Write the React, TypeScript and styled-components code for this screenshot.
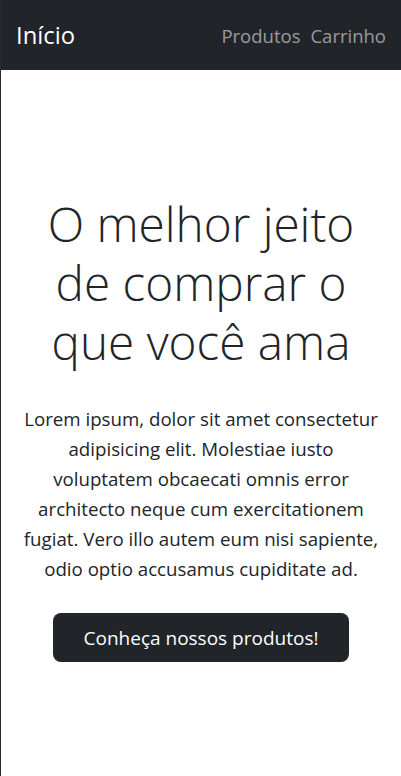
import React from "react";
import styled, { createGlobalStyle } from "styled-components";

const Global = createGlobalStyle`
  * { box-sizing: border-box; }
  html, body { margin: 0; padding: 0; background: #fff; }
  body {
    font-family: "Open Sans", "Noto Sans", "Liberation Sans", sans-serif;
    color: #212529;
    border-left: 1px solid #2b2b2b;
    min-height: 776px;
  }
`;

const Nav = styled.nav`
  height: 70px;
  background: #212529;
  display: flex;
  align-items: center;
  justify-content: space-between;
  padding: 0 15px 0 16px;
  margin-left: -1px;
`;

const Brand = styled.a`
  color: #fff;
  font-size: 23.8px;
  text-decoration: none;
`;

const Links = styled.div`
  display: flex;
  gap: 10px;
`;

const NavLink = styled.a`
  color: rgba(255, 255, 255, 0.55);
  font-size: 18.5px;
  text-decoration: none;
`;

const Hero = styled.main`
  display: flex;
  flex-direction: column;
  align-items: center;
  text-align: center;
  padding: 124px 20px 0;
`;

const Title = styled.h1`
  margin: 0 0 33px;
  font-size: 47.7px;
  font-weight: 300;
  line-height: 59px;
`;

const Lead = styled.p`
  margin: 0 0 29px;
  font-size: 18.7px;
  line-height: 30px;
`;

const Button = styled.button`
  background: #212529;
  color: #fff;
  border: none;
  border-radius: 8px;
  width: 296px;
  height: 49px;
  font-family: inherit;
  font-size: 19px;
  cursor: pointer;
`;

export default function App() {
  return (
    <>
      <Global />
      <Nav>
        <Brand href="#">Início</Brand>
        <Links>
          <NavLink href="#">Produtos</NavLink>
          <NavLink href="#">Carrinho</NavLink>
        </Links>
      </Nav>
      <Hero>
        <Title>
          O melhor jeito
          <br />
          de comprar o
          <br />
          que você ama
        </Title>
        <Lead>
          Lorem ipsum, dolor sit amet consectetur adipisicing elit. Molestiae
          iusto voluptatem obcaecati omnis error architecto neque cum
          exercitationem fugiat. Vero illo autem eum nisi sapiente, odio optio
          accusamus cupiditate ad.
        </Lead>
        <Button>Conheça nossos produtos!</Button>
      </Hero>
    </>
  );
}
